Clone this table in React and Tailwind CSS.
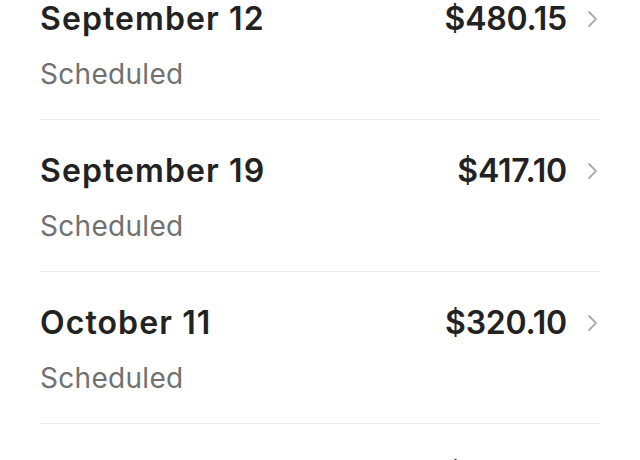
import React from "react";

const rows = [
  { date: "September 12", amount: "$480.15" },
  { date: "September 19", amount: "$417.10" },
  { date: "October 11", amount: "$320.10" },
  { date: "October 18", amount: "$320.10" },
];

function Chevron() {
  return (
    <svg width="14" height="18" viewBox="0 0 14 18" fill="none" className="shrink-0">
      <path d="M4 2 L11 9 L4 16" stroke="#ababab" strokeWidth="1.8" strokeLinecap="round" strokeLinejoin="round" />
    </svg>
  );
}

export default function App() {
  return (
    <div className="w-[640px] h-[460px] overflow-hidden bg-white" style={{ fontFamily: "Inter, 'Noto Sans', sans-serif" }}>
      <div className="mx-10 -mt-[32px]">
        {rows.map((r, i) => (
          <div key={i} className="border-b border-[#ebebeb] pt-[33px] pb-[29px]">
            <div className="flex items-center justify-between">
              <div className="text-[32px] leading-[36px] font-semibold text-[#222222] tracking-[1.1px]">{r.date}</div>
              <div className="flex items-center gap-[18px] mr-[1px]">
                <div className="text-[32px] leading-[36px] font-semibold text-[#222222] tracking-[-0.2px]">{r.amount}</div>
                <Chevron />
              </div>
            </div>
            <div className="mt-[21px] text-[28px] leading-[32px] text-[#717171] tracking-[0.3px]">Scheduled</div>
          </div>
        ))}
      </div>
    </div>
  );
}
